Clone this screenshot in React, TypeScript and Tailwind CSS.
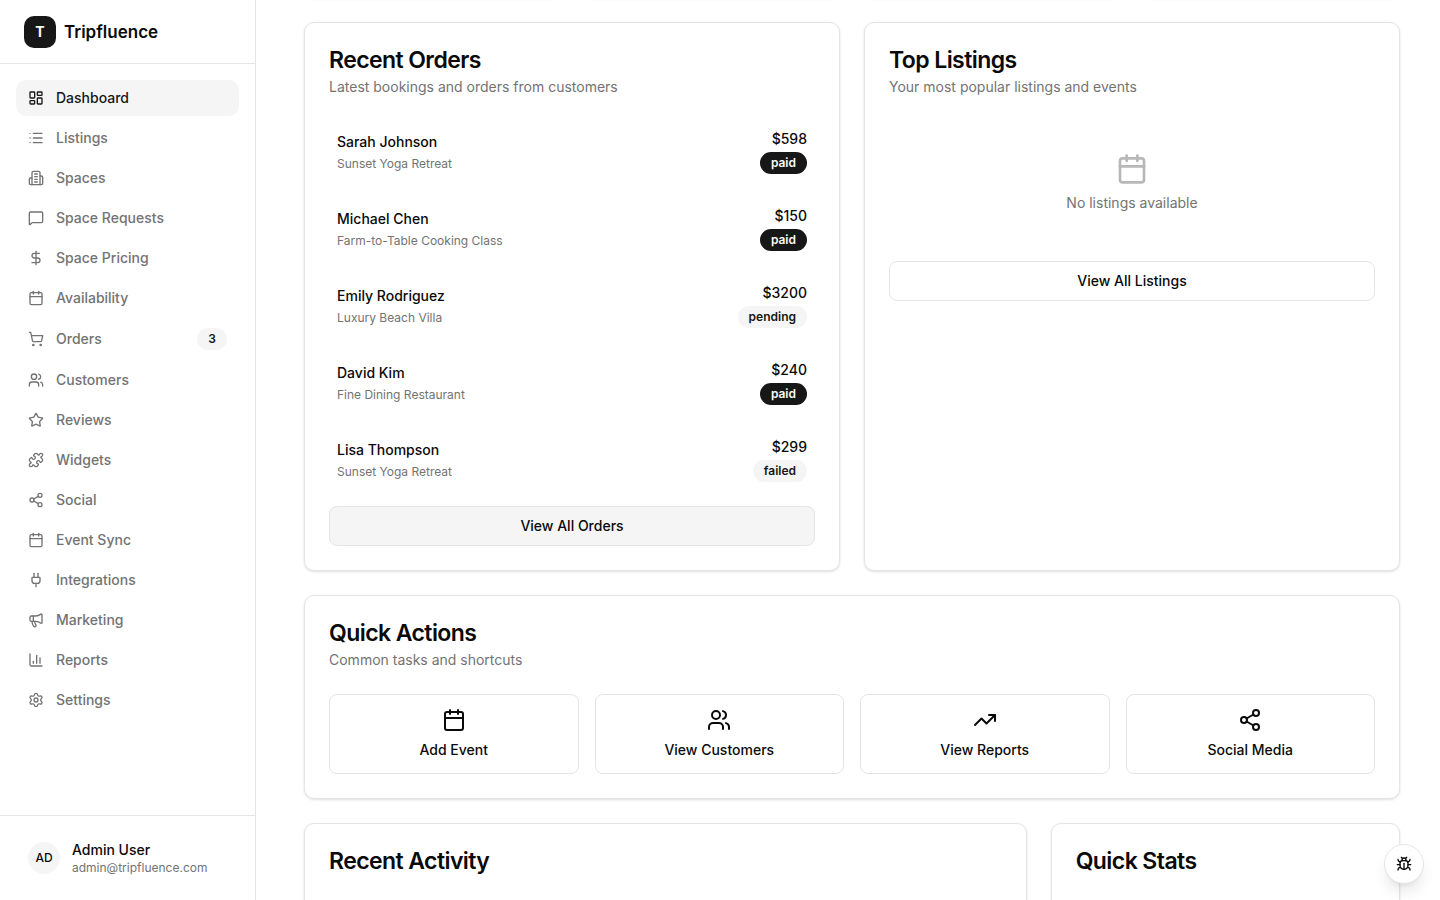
import type { ReactNode } from "react";
import {
  LayoutDashboard, List, MessageSquare, DollarSign, Calendar, ShoppingCart, Users, Star,
  Puzzle, Share2, Plug, Megaphone, ChartColumn, Settings, TrendingUp, Bug,
} from "lucide-react";

type Icon = (props: { className?: string }) => ReactNode;
type IconType = Icon | typeof List;
type NavItem = { label: string; icon: IconType; badge?: string; active?: boolean };

function OfficeBuilding({ className }: { className?: string }) {
  return (
    <svg
      className={className}
      viewBox="0 0 24 24"
      fill="none"
      stroke="currentColor"
      strokeWidth="2"
      strokeLinecap="round"
      strokeLinejoin="round"
      aria-hidden="true"
    >
      <path d="M6 22V4a2 2 0 0 1 2-2h8a2 2 0 0 1 2 2v18Z" />
      <path d="M6 12H4a2 2 0 0 0-2 2v6a2 2 0 0 0 2 2h2" />
      <path d="M18 9h2a2 2 0 0 1 2 2v9a2 2 0 0 1-2 2h-2" />
      <path d="M10 6h4" />
      <path d="M10 10h4" />
      <path d="M10 14h4" />
      <path d="M10 18h4" />
    </svg>
  );
}

const nav: NavItem[] = [
  { label: "Dashboard", icon: LayoutDashboard, active: true },
  { label: "Listings", icon: List },
  { label: "Spaces", icon: OfficeBuilding },
  { label: "Space Requests", icon: MessageSquare },
  { label: "Space Pricing", icon: DollarSign },
  { label: "Availability", icon: Calendar },
  { label: "Orders", icon: ShoppingCart, badge: "3" },
  { label: "Customers", icon: Users },
  { label: "Reviews", icon: Star },
  { label: "Widgets", icon: Puzzle },
  { label: "Social", icon: Share2 },
  { label: "Event Sync", icon: Calendar },
  { label: "Integrations", icon: Plug },
  { label: "Marketing", icon: Megaphone },
  { label: "Reports", icon: ChartColumn },
  { label: "Settings", icon: Settings },
];

const orders = [
  { name: "Sarah Johnson", item: "Sunset Yoga Retreat", price: "$598", status: "paid" },
  { name: "Michael Chen", item: "Farm-to-Table Cooking Class", price: "$150", status: "paid" },
  { name: "Emily Rodriguez", item: "Luxury Beach Villa", price: "$3200", status: "pending" },
  { name: "David Kim", item: "Fine Dining Restaurant", price: "$240", status: "paid" },
  { name: "Lisa Thompson", item: "Sunset Yoga Retreat", price: "$299", status: "failed" },
];

const actions: { label: string; icon: IconType }[] = [
  { label: "Add Event", icon: Calendar },
  { label: "View Customers", icon: Users },
  { label: "View Reports", icon: TrendingUp },
  { label: "Social Media", icon: Share2 },
];

function Badge({ children, dark = false }: { children: ReactNode; dark?: boolean }) {
  return (
    <span
      className={`inline-flex items-center rounded-full border border-transparent px-2.5 py-0.5 text-xs font-semibold ${
        dark ? "bg-neutral-900 text-neutral-50" : "bg-neutral-100 text-neutral-900"
      }`}
    >
      {children}
    </span>
  );
}

function Card({ title, description, className = "", children }: {
  title: string; description?: string; className?: string; children?: ReactNode;
}) {
  return (
    <section className={`rounded-[10px] border border-neutral-200 bg-white p-6 shadow-sm ${className}`}>
      <header className="flex flex-col gap-1 pb-6">
        <h2 className="text-[23px] leading-[26px] font-semibold tracking-tight">{title}</h2>
        {description && <p className="text-sm text-neutral-500">{description}</p>}
      </header>
      {children}
    </section>
  );
}

function OutlineButton({ children, filled = false }: { children: ReactNode; filled?: boolean }) {
  return (
    <button
      type="button"
      className={`mt-4 h-10 w-full rounded-lg border border-neutral-200 px-4 text-sm font-medium ${
        filled ? "bg-neutral-100" : "bg-white"
      }`}
    >
      {children}
    </button>
  );
}

function Sidebar() {
  return (
    <aside className="flex w-64 shrink-0 flex-col border-r border-neutral-200">
      <div className="flex h-16 shrink-0 items-center gap-2 border-b border-neutral-200 px-6">
        <div className="flex size-8 items-center justify-center rounded-[10px] bg-neutral-900 text-sm font-bold text-neutral-50">
          T
        </div>
        <span className="text-[17px] leading-7 font-semibold">Tripfluence</span>
      </div>
      <nav className="flex min-h-0 flex-1 flex-col gap-1 p-4">
        {nav.map(({ label, icon: Icon, badge, active }) => (
          <a
            key={label}
            href="#"
            className={`flex items-center gap-3 rounded-[10px] px-3 py-2 text-sm font-medium ${
              active ? "bg-neutral-100 text-neutral-900" : "text-neutral-500"
            }`}
          >
            <Icon className="size-4" />
            <span className="flex-1">{label}</span>
            {badge && <Badge>{badge}</Badge>}
          </a>
        ))}
      </nav>
      <div className="border-t border-neutral-200 p-4">
        <button type="button" className="flex w-full items-center gap-3 px-3 py-2 text-left">
          <span className="flex size-8 items-center justify-center rounded-full bg-neutral-100 text-xs font-medium">
            AD
          </span>
          <span className="flex flex-col">
            <span className="text-sm font-medium">Admin User</span>
            <span className="text-xs text-neutral-500">admin@tripfluence.com</span>
          </span>
        </button>
      </div>
    </aside>
  );
}

export default function App() {
  return (
    <div className="flex h-screen overflow-hidden bg-white font-['Inter',sans-serif] text-neutral-950">
      <Sidebar />
      <main className="flex min-w-0 flex-1 flex-col gap-6 overflow-hidden pr-10 pl-12">
        <div className="-mt-10 grid shrink-0 grid-cols-4 gap-6">
          {[0, 1, 2, 3].map((i) => (
            <div key={i} className="h-[38px] rounded-[10px] border border-neutral-200 shadow-sm" />
          ))}
        </div>

        <div className="grid shrink-0 grid-cols-2 gap-6">
          <Card title="Recent Orders" description="Latest bookings and orders from customers">
            <ul className="flex flex-col gap-4">
              {orders.map((o) => (
                <li key={o.name} className="flex items-center justify-between p-2">
                  <div className="flex flex-col gap-1">
                    <p className="text-sm font-medium">{o.name}</p>
                    <p className="text-xs text-neutral-500">{o.item}</p>
                  </div>
                  <div className="flex flex-col items-end gap-[3px]">
                    <p className="text-sm font-medium">{o.price}</p>
                    <Badge dark={o.status === "paid"}>{o.status}</Badge>
                  </div>
                </li>
              ))}
            </ul>
            <OutlineButton filled>View All Orders</OutlineButton>
          </Card>

          <Card title="Top Listings" description="Your most popular listings and events">
            <div className="flex flex-col items-center gap-2 py-8 text-neutral-500">
              <Calendar className="size-8 opacity-50" />
              <p className="text-sm">No listings available</p>
            </div>
            <OutlineButton>View All Listings</OutlineButton>
          </Card>
        </div>

        <Card title="Quick Actions" description="Common tasks and shortcuts" className="shrink-0">
          <div className="grid grid-cols-4 gap-4">
            {actions.map(({ label, icon: Icon }) => (
              <button
                key={label}
                type="button"
                className="flex h-20 flex-col items-center justify-center gap-2 rounded-lg border border-neutral-200 text-sm font-medium"
              >
                <Icon className="size-6" />
                {label}
              </button>
            ))}
          </div>
        </Card>

        <div className="grid shrink-0 grid-cols-3 gap-6">
          <Card title="Recent Activity" className="col-span-2 min-h-40" />
          <Card title="Quick Stats" className="min-h-40" />
        </div>
      </main>
      <button
        type="button"
        aria-label="Report a bug"
        className="fixed right-4 bottom-4 flex size-10 items-center justify-center rounded-full border border-neutral-200 bg-white shadow-lg"
      >
        <Bug className="size-4" />
      </button>
    </div>
  );
}
